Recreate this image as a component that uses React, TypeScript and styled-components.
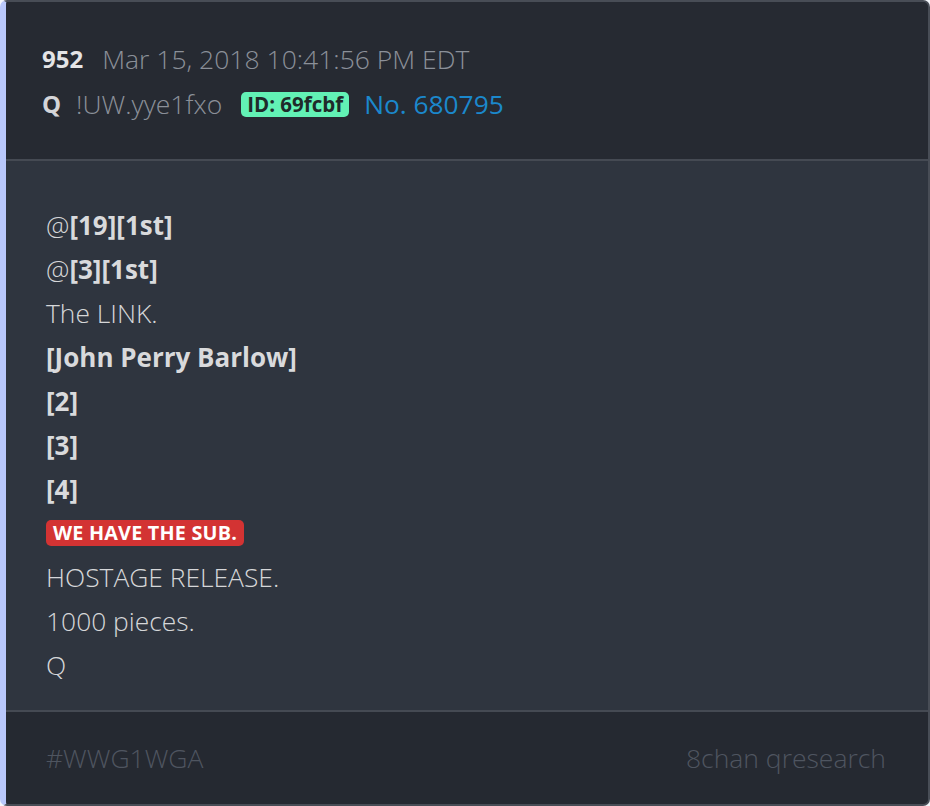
import styled, { createGlobalStyle } from "styled-components";

const GlobalStyle = createGlobalStyle`
  html, body {
    margin: 0;
    padding: 0;
    background: #f4f6fb;
  }
  body {
    font-family: "Open Sans", "Noto Sans", sans-serif;
  }
`;

const lines: { text: string; kind: "mention" | "plain" | "bold" | "red" }[] = [
  { text: "[19][1st]", kind: "mention" },
  { text: "[3][1st]", kind: "mention" },
  { text: "The LINK.", kind: "plain" },
  { text: "[John Perry Barlow]", kind: "bold" },
  { text: "[2]", kind: "bold" },
  { text: "[3]", kind: "bold" },
  { text: "[4]", kind: "bold" },
  { text: "WE HAVE THE SUB.", kind: "red" },
  { text: "HOSTAGE RELEASE.", kind: "plain" },
  { text: "1000 pieces.", kind: "plain" },
  { text: "Q", kind: "plain" },
];

export default function App() {
  return (
    <>
      <GlobalStyle />
      <Card>
        <Header>
          <MetaRow>
            <PostNum>952</PostNum>
            <Muted>Mar 15, 2018 10:41:56 PM EDT</Muted>
          </MetaRow>
          <MetaRow>
            <Author>Q</Author>
            <Muted>!UW.yye1fxo</Muted>
            <IdBadge>ID: 69fcbf</IdBadge>
            <PostLink>No. 680795</PostLink>
          </MetaRow>
        </Header>
        <Body>
          {lines.map((line, i) => (
            <Line key={i}>
              {line.kind === "mention" && (
                <>
                  @<b>{line.text}</b>
                </>
              )}
              {line.kind === "plain" && line.text}
              {line.kind === "bold" && <b>{line.text}</b>}
              {line.kind === "red" && <RedTag>{line.text}</RedTag>}
            </Line>
          ))}
        </Body>
        <Footer>
          <span>#WWG1WGA</span>
          <span>8chan qresearch</span>
        </Footer>
      </Card>
    </>
  );
}

const Card = styled.div`
  box-sizing: border-box;
  width: 930px;
  height: 806px;
  display: flex;
  flex-direction: column;
  border: 2px solid #484d56;
  border-left: 6px solid #b9c8fb;
  border-radius: 7px;
  overflow: hidden;
  background: #2f353f;
`;

const Header = styled.div`
  background: #262a32;
  height: 159px;
  box-sizing: border-box;
  padding: 41px 0 0 36px;
  border-bottom: 2px solid #454a53;
  display: flex;
  flex-direction: column;
  gap: 13px;
`;

const MetaRow = styled.div`
  display: flex;
  align-items: center;
  gap: 15px;
  font-size: 26.5px;
  font-weight: 300;
  line-height: 32px;
  height: 32px;
`;

const PostNum = styled.span`
  font-weight: 700;
  color: #e4e4e6;
  font-size: 24px;
  margin-right: 4px;
`;

const Author = styled.span`
  font-weight: 700;
  color: #d4d5d8;
  font-size: 24px;
`;

const Muted = styled.span`
  color: #8b9099;
`;

const IdBadge = styled.span`
  background: #62f2b5;
  color: #1f2b2a;
  font-weight: 700;
  font-size: 20.5px;
  line-height: 25px;
  padding: 0 6px;
  border-radius: 5px;
  margin-left: 4px;
`;

const PostLink = styled.span`
  color: #1b88cc;
  font-weight: 400;
  font-size: 26.3px;
`;

const Body = styled.div`
  flex: 1;
  box-sizing: border-box;
  padding: 42px 0 0 40px;
  border-bottom: 2px solid #454a53;
  display: flex;
  flex-direction: column;
`;

const Line = styled.div`
  color: #d6d7d9;
  font-size: 26.4px;
  font-weight: 300;
  line-height: 44px;
  height: 44px;
  display: flex;
  align-items: center;

  b {
    font-weight: 700;
    font-size: 26px;
    color: #d9dadc;
  }
`;

const RedTag = styled.span`
  background: #d33333;
  color: #ffffff;
  font-weight: 700;
  font-size: 19.8px;
  line-height: 26px;
  padding: 0 7px;
  border-radius: 5px;
  letter-spacing: 0.2px;
`;

const Footer = styled.div`
  background: #252931;
  height: 92px;
  box-sizing: border-box;
  padding: 0 42px 0 40px;
  display: flex;
  align-items: center;
  justify-content: space-between;
  color: #4f5560;
  font-size: 26.5px;
  font-weight: 300;
`;
